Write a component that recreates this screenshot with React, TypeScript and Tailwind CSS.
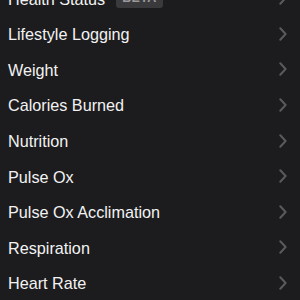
import React from 'react';

const items = [
  'Lifestyle Logging',
  'Weight',
  'Calories Burned',
  'Nutrition',
  'Pulse Ox',
  'Pulse Ox Acclimation',
  'Respiration',
  'Heart Rate',
];

const Chevron: React.FC = () => (
  <svg width="8" height="14" viewBox="0 0 8 14" className="ml-auto text-[#5a5a5e]">
    <path d="M1.3 1.3 L6.6 7 L1.3 12.7" fill="none" stroke="currentColor" strokeWidth="2" strokeLinecap="round" strokeLinejoin="round" />
  </svg>
);

const Row: React.FC<{ label: string; badge?: string }> = ({ label, badge }) => (
  <div className="h-[35.6px] flex items-center pl-2 pr-[13px]">
    <span className="text-[16.2px] text-[#f2f2f2] leading-none pt-px">{label}</span>
    {badge && (
      <span className="ml-[11px] px-[6px] py-[3px] rounded-[3px] bg-[#3a3a3c] text-[#9a9a9e] text-[12.5px] font-semibold leading-none tracking-wide">
        {badge}
      </span>
    )}
    <Chevron />
  </div>
);

const App: React.FC = () => {
  return (
    <div className="w-[300px] h-[300px] overflow-hidden bg-[#1c1c1e]" style={{ fontFamily: '"Liberation Sans", Arial, sans-serif' }}>
      <div className="-mt-[19.5px]">
        <Row label="Health Status" badge="BETA" />
        {items.map((label) => (
          <Row key={label} label={label} />
        ))}
      </div>
    </div>
  );
};

export default App;
